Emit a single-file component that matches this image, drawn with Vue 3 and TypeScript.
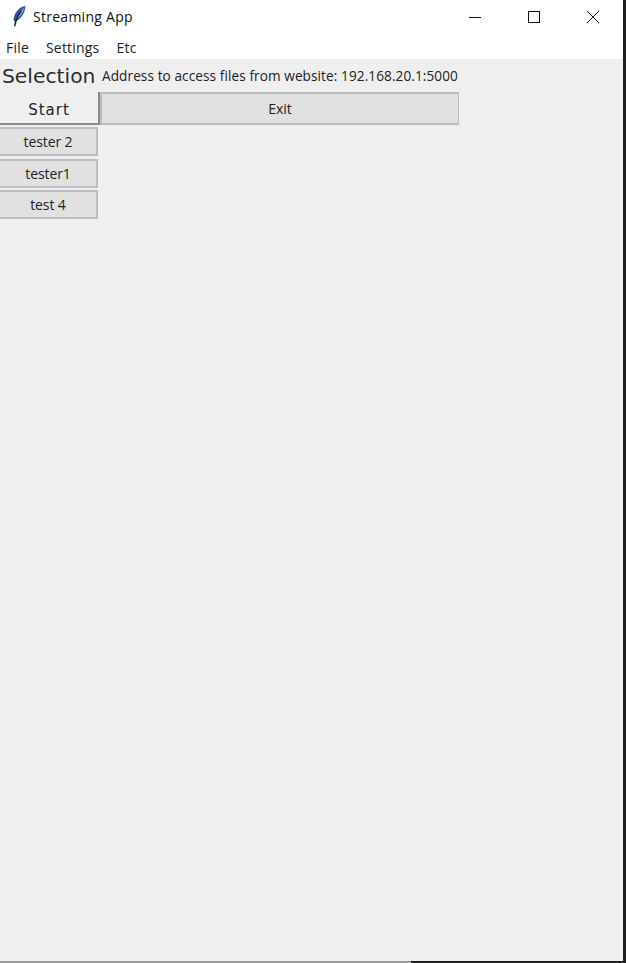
<script setup lang="ts">
const menus: string[] = ['File', 'Settings', 'Etc']
const items: string[] = ['tester 2', 'tester1', 'test 4']
</script>

<template>
  <div class="frame">
    <div class="window">
      <header class="titlebar">
        <svg class="feather" viewBox="0 0 16 22" width="16" height="22">
          <path d="M14.500 1C9.500 1.500 4.500 6 3 12c-.5 2-.4 3.600.2 4.500C9 15.500 14 8.500 14.500 1z" fill="#2b5598" />
          <path d="M13.800 2C10 5.500 6.500 10 4.600 15c4-1.500 7.700-7 9.200-13z" fill="#6b9fe0" />
          <path d="M10 6C7.500 9.500 5 14.500 3.600 21" fill="none" stroke="#1a2538" stroke-width="1.500" />
        </svg>
        <span class="title">Streaming App</span>
        <div class="controls">
          <svg class="ctl" viewBox="0 0 12 12" width="12" height="12"><path d="M0 6.500H12" stroke="#111" stroke-width="1" fill="none" /></svg>
          <svg class="ctl" viewBox="0 0 12 12" width="12" height="12"><rect x="0.500" y="0.500" width="11" height="11" stroke="#111" stroke-width="1" fill="none" /></svg>
          <svg class="ctl" viewBox="0 0 12 12" width="12" height="12"><path d="M0 0L12 12M12 0L0 12" stroke="#111" stroke-width="1" fill="none" /></svg>
        </div>
      </header>
      <nav class="menubar">
        <span v-for="m in menus" :key="m" class="menu">{{ m }}</span>
      </nav>
      <main class="content">
        <div class="grid">
          <div class="selection">Selection</div>
          <div class="address">Address to access files from website: 192.168.20.1:5000</div>
          <button class="start">Start</button>
          <button class="exit">Exit</button>
        </div>
        <div class="list">
          <button v-for="i in items" :key="i" class="item">{{ i }}</button>
        </div>
      </main>
    </div>
    <div class="bottom"><span class="seg-light"></span></div>
  </div>
</template>

<style>
html, body { margin: 0; padding: 0; background: #1f1f1f; }
</style>

<style scoped>
.frame {
  width: 626px;
  height: 963px;
  display: flex;
  flex-direction: column;
  background: #202020;
  overflow: hidden;
}
.window {
  width: 623px;
  height: 961px;
  display: flex;
  flex-direction: column;
  background: #efefef;
  font-family: "Open Sans", "Noto Sans", sans-serif;
  color: #1c1c1c;
}
.titlebar {
  height: 34px;
  flex: none;
  background: #fff;
  display: flex;
  align-items: center;
  padding-left: 11px;
  box-sizing: border-box;
}
.feather { flex: none; margin-top: -2px; margin-right: 6px; }
.title { font-size: 14px; color: #111; letter-spacing: 0.27px; margin-top: -1px; }
.controls {
  margin-left: auto;
  display: flex;
  gap: 47px;
  padding-right: 24px;
}
.ctl { display: block; }
.menubar {
  height: 25px;
  flex: none;
  background: #fff;
  display: flex;
  align-items: center;
  gap: 17px;
  padding: 2px 0 0 6px;
  font-size: 14px;
  box-sizing: border-box;
}
.menu { color: #222; letter-spacing: 0.2px; }
.content { flex: 1; display: flex; flex-direction: column; }
.grid {
  display: grid;
  grid-template-columns: 100px 358px;
  column-gap: 0;
  grid-template-rows: 33px 33px;
  align-items: center;
}
.selection {
  font-family: "DejaVu Sans", sans-serif;
  font-size: 20.300px;
  color: #2c2c2c;
  padding-left: 2px;
  white-space: nowrap;
}
.address {
  font-size: 13.600px;
  color: #222;
  white-space: nowrap;
  letter-spacing: 0.09px;
  padding-left: 2px;
}
button {
  margin: 0;
  padding: 0;
  box-sizing: border-box;
  font-family: inherit;
  color: #222;
  background: #e1e1e1;
  border: 1px solid #adadad;
}
.start {
  height: 33px;
  width: 100px;
  font-family: "DejaVu Sans", sans-serif;
  font-size: 15px;
  letter-spacing: 1px;
  padding-top: 4px;
  background: #f0f0f0;
  border-width: 0 2px 2px 0;
  border-color: #8a8a8a;
  border-style: solid;
}
.exit {
  height: 33px;
  width: 359px;
  font-size: 14px;
  border-width: 2px 1px 2px 2px;
  border-color: #bcbcbc;
  background: #e0e0e0;
}
.list {
  display: flex;
  flex-direction: column;
  gap: 2.500px;
  padding-top: 2px;
}
.item {
  width: 98px;
  height: 29px;
  font-size: 14px;
  border-width: 2px 2px 2px 0;
  border-color: #bdbdbd;
  letter-spacing: -0.1px;
}
.bottom {
  height: 2px;
  display: flex;
  flex: none;
}
.seg-light {
  display: block;
  width: 411px;
  height: 2px;
  background: #9c9c9c;
}
</style>
